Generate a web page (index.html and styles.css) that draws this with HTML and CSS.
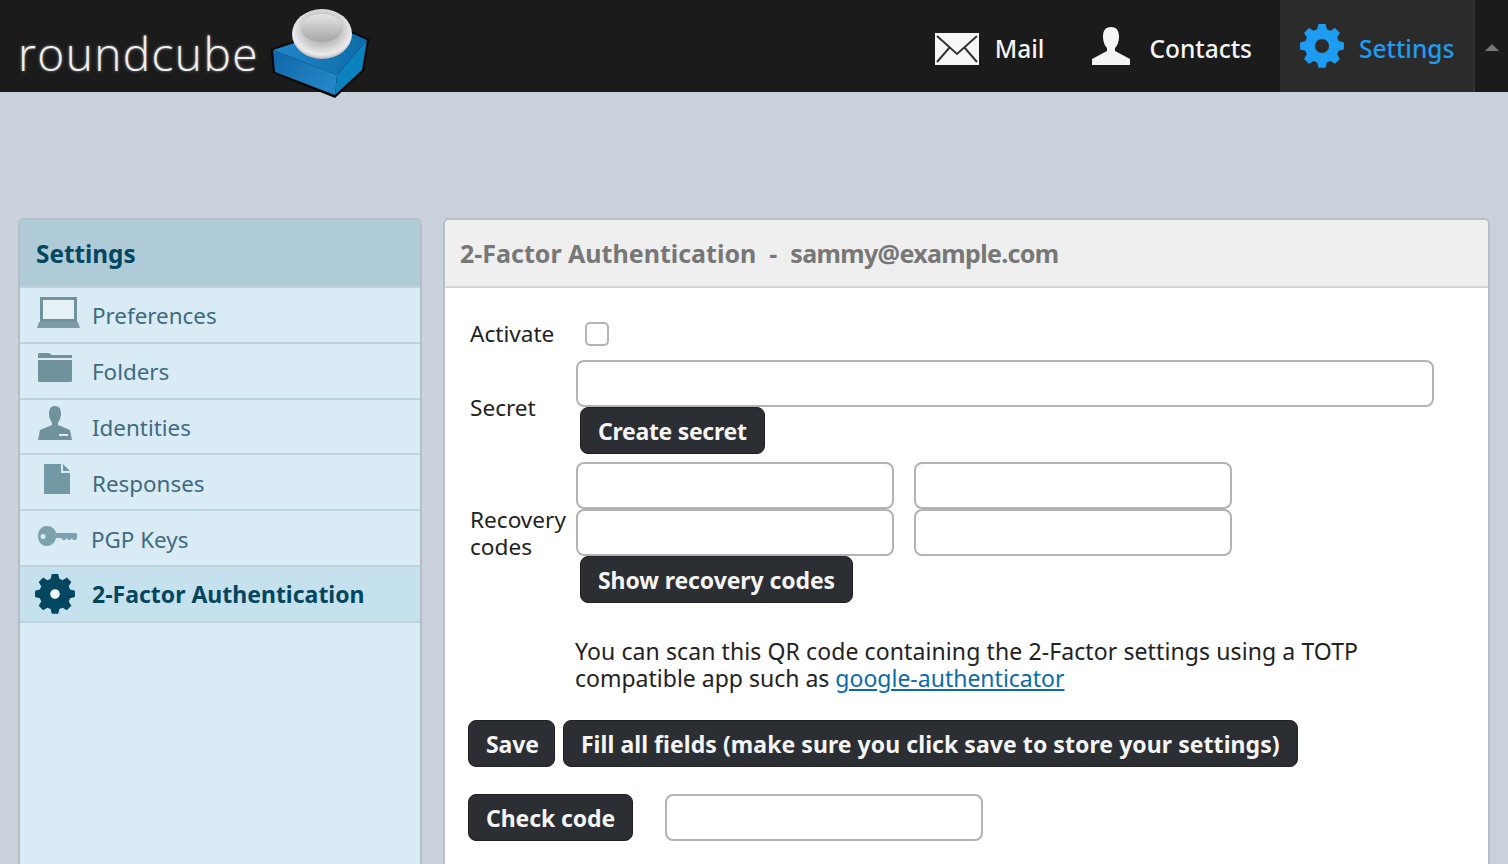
FILE: index.html
```html
<!DOCTYPE html>
<html lang="en">
<head>
<meta charset="utf-8">
<title>Roundcube Settings</title>
<link rel="stylesheet" href="styles.css">
</head>
<body>
<header class="topbar">
  <div class="logo">
    <span class="logo-text">roundcube</span>
    <svg class="logo-cube" width="100" height="96" viewBox="0 0 100 96">
      <defs>
        <linearGradient id="cubeLeft" x1="0" y1="0" x2="1" y2="0.6"><stop offset="0" stop-color="#0f66a8"/><stop offset="1" stop-color="#2486c6"/></linearGradient>
        <linearGradient id="cubeTop" x1="0" y1="0" x2="1" y2="0"><stop offset="0" stop-color="#2288cc"/><stop offset="1" stop-color="#0d6aa8"/></linearGradient>
        <radialGradient id="ball" cx="0.5" cy="0.42" r="0.62"><stop offset="0" stop-color="#9c9c9c"/><stop offset="0.5" stop-color="#c4c4c4"/><stop offset="0.8" stop-color="#ececec"/><stop offset="1" stop-color="#9a9a9a"/></radialGradient>
        <linearGradient id="dish" x1="0" y1="0" x2="0" y2="1"><stop offset="0" stop-color="#e4e4e4"/><stop offset="1" stop-color="#a6a6a6"/></linearGradient>
      </defs>
      <path d="M1 46 L70 23 L99 36 L94 68 L65 95 L3 70 Z" fill="#060606"/>
      <path d="M3 47 L70 25 L97 37 L67 72 Z" fill="url(#cubeTop)"/>
      <path d="M3 47 L67 72 L65 92 L5 69 Z" fill="url(#cubeLeft)"/>
      <path d="M67 72 L97 37 L92 67 L65 92 Z" fill="#0a82bd"/>
      <ellipse cx="52" cy="31" rx="30" ry="25" fill="url(#ball)"/>
      <ellipse cx="52" cy="25" rx="21" ry="14" fill="url(#dish)"/>
    </svg>
  </div>
  <nav class="topnav">
    <a class="tab tab-mail">
      <svg class="tab-icon tab-icon-mail" width="46" height="34" viewBox="0 0 46 34"><rect x="1" y="1" width="44" height="32" fill="#f7f7f7"/><path d="M3 4 L23 22 L43 4 M3 30 L16 15 M43 30 L30 15" fill="none" stroke="#333" stroke-width="2"/></svg>
      <span class="tab-label">Mail</span>
    </a>
    <a class="tab tab-contacts">
      <svg class="tab-icon" width="40" height="40" viewBox="0 0 40 40"><path d="M20 1c6 0 8 4 8 10 0 5-2 9-4 11v3l15 8v6H1v-6l15-8v-3c-2-2-4-6-4-11 0-6 2-10 8-10Z" fill="#f5f5f5"/></svg>
      <span class="tab-label">Contacts</span>
    </a>
    <a class="tab tab-active">
      <svg class="tab-icon" width="44" height="44" viewBox="-3 1 50 50"><path fill="#1e9cf2" fill-rule="evenodd" d="M18 1h8l1.500 6 4 1.700 5.300-3.200 5.600 5.600-3.200 5.300 1.700 4 6 1.500v8l-6 1.500-1.700 4 3.200 5.300-5.600 5.600-5.300-3.200-4 1.700-1.500 6h-8l-1.500-6-4-1.700-5.300 3.200-5.600-5.600 3.200-5.300-1.700-4-6-1.500v-8l6-1.500 1.700-4-3.200-5.300 5.600-5.600 5.300 3.200 4-1.700Z M22 18a8 8 0 1 0 0 16 8 8 0 0 0 0-16Z"/></svg>
      <span class="tab-label">Settings</span>
    </a>
    <span class="collapse"><i class="arrow"></i></span>
  </nav>
</header>

<main class="layout">
  <aside class="sidebar">
    <h2 class="sidebar-title">Settings</h2>
    <ul class="menu">
      <li class="menu-item">
        <svg class="menu-icon" width="44" height="36" viewBox="0 0 44 36"><path fill="#6f929d" fill-rule="evenodd" d="M6 0h37v25H6Z M9 3v19h31V3Z"/><path fill="#e6f1f6" d="M9 3h31v19H9Z"/><path fill="#7b9ba6" d="M5 25h39l2 6H3Z"/></svg>
        <span>Preferences</span>
      </li>
      <li class="menu-item">
        <svg class="menu-icon" width="44" height="36" viewBox="0 0 44 36"><path fill="#6f929d" d="M5 0h10l3 2h20v3H4V1Z M4 7h34v21l-1 1H5l-1-1Z"/></svg>
        <span>Folders</span>
      </li>
      <li class="menu-item">
        <svg class="menu-icon" width="44" height="36" viewBox="0 0 44 36"><g transform="translate(-1 -2)"><path fill="#6f929d" d="M22 0c5 0 6 4 6 8 0 4-2 7-3 9v2l12 5 2 10H5l2-10 12-5v-2c-1-2-3-5-3-9 0-4 1-8 6-8Z"/><path fill="#dbecf4" d="M26 28h9v2h-9Z"/></g></svg>
        <span>Identities</span>
      </li>
      <li class="menu-item">
        <svg class="menu-icon" width="44" height="36" viewBox="0 0 44 36"><path fill="#729aa5" d="M10 0h17v9h9v21H10Z M29 0l7 7h-7Z"/></svg>
        <span>Responses</span>
      </li>
      <li class="menu-item menu-key">
        <svg class="menu-icon" width="44" height="36" viewBox="0 0 44 36"><path fill="#7ba2ae" fill-rule="evenodd" d="M13 6c5 0 8 3 9 7h19a2 2 0 0 1 2 3v2c0 1-1 2-2 2h-2l-1-2-2 2h-2l-1-2-2 2h-2l-2-2h-5c-1 4-4 8-9 8-6 0-9-5-9-10s3-10 9-10Z M9 14a2.500 2.500 0 1 0 .1 0Z"/></svg>
        <span>PGP Keys</span>
      </li>
      <li class="menu-item menu-active">
        <svg class="menu-icon menu-icon-gear" width="40" height="40" viewBox="-3 1 50 50"><circle cx="22" cy="26" r="8" fill="#f4fafd"/><path fill="#03465f" fill-rule="evenodd" d="M18 1h8l1.500 6 4 1.700 5.300-3.200 5.600 5.600-3.200 5.300 1.700 4 6 1.500v8l-6 1.500-1.700 4 3.200 5.300-5.600 5.600-5.300-3.200-4 1.700-1.500 6h-8l-1.500-6-4-1.700-5.300 3.200-5.600-5.600 3.200-5.300-1.700-4-6-1.500v-8l6-1.500 1.700-4-3.200-5.300 5.600-5.600 5.300 3.200 4-1.700Z M22 20a6 6 0 1 0 0 12 6 6 0 0 0 0-12Z"/></svg>
        <span>2-Factor Authentication</span>
      </li>
    </ul>
  </aside>

  <section class="panel">
    <h1 class="panel-title">2-Factor Authentication &nbsp;-&nbsp; <span class="panel-user">sammy@example.com</span></h1>
    <div class="panel-body">
      <div class="row row-activate">
        <label class="row-label">Activate</label>
        <input type="checkbox" class="check">
      </div>
      <div class="row row-secret">
        <label class="row-label">Secret</label>
        <div class="row-content">
          <input type="text" class="field field-wide">
          <button class="btn btn-inset btn-create">Create secret</button>
        </div>
      </div>
      <div class="row row-recovery">
        <label class="row-label">Recovery codes</label>
        <div class="row-content">
          <div class="code-grid">
            <input type="text" class="field">
            <input type="text" class="field">
            <input type="text" class="field">
            <input type="text" class="field">
          </div>
          <button class="btn btn-inset">Show recovery codes</button>
        </div>
      </div>
      <p class="scan-note"><span class="scan-first">You can scan this QR code containing the 2-Factor settings using a TOTP</span> compatible app such as <a href="#" class="link">google-authenticator</a></p>
      <div class="actions">
        <button class="btn btn-save">Save</button>
        <button class="btn btn-fill">Fill all fields (make sure you click save to store your settings)</button>
      </div>
      <div class="check-code">
        <button class="btn">Check code</button>
        <input type="text" class="field">
      </div>
    </div>
  </section>
</main>
</body>
</html>
```
FILE: styles.css
```css
* { box-sizing: border-box; }
html, body { height: 100%; }
body {
  margin: 0;
  height: 864px;
  overflow: hidden;
  background: #c9d2da;
  font-family: "Noto Sans", "DejaVu Sans", sans-serif;
  font-size: 23px;
  color: #222;
}
.topbar {
  height: 92px;
  background: #1b1b1b;
  display: flex;
  justify-content: space-between;
}
.logo { display: flex; height: 92px; padding-left: 18px; position: relative; }
.logo-text {
  font-family: "Open Sans", sans-serif;
  font-weight: 300;
  font-size: 46px;
  line-height: 106px;
  letter-spacing: 1.4px;
  color: #f0f0f0;
  text-shadow: 0 0 3px rgba(255,255,255,.6);
}
.logo-cube { position: absolute; left: 270px; top: 3px; overflow: visible; }
.topnav { display: flex; height: 92px; }
.tab {
  display: flex;
  align-items: center;
  font-size: 24.5px;
  font-weight: 500;
  color: #f5f5f5;
}
.tab-label { padding-top: 4px; }
.tab-icon { margin-right: 15px; flex: none; }
.tab-icon-mail { margin-top: 5px; }
.tab-mail { padding-right: 25px; }
.tab-contacts { margin-left: 22px; padding-right: 28px; }
.tab-contacts .tab-icon { margin-right: 18px; }
.tab-active {
  background: #2b2b2b;
  color: #1e9cf2;
  width: 193px;
  padding-left: 20px;
}
.collapse {
  width: 35px;
  border-left: 2px solid #333;
  display: flex;
  justify-content: center;
  padding-top: 44px;
}
.arrow {
  width: 0; height: 0;
  border-left: 7px solid transparent;
  border-right: 7px solid transparent;
  border-bottom: 7px solid #777;
}
.layout {
  display: flex;
  gap: 21px;
  padding: 126px 18px 0 18px;
  height: 772px;
}
.sidebar {
  width: 404px;
  flex: none;
  background: #d9ebf4;
  border: 2px solid #b6bfc7;
  border-bottom: 0;
  border-radius: 6px 6px 0 0;
  overflow: hidden;
}
.sidebar-title {
  margin: 0;
  height: 68px;
  line-height: 67px;
  padding-left: 16px;
  background: #afcbd7;
  font-size: 24.3px;
  font-weight: bold;
  color: #03465f;
  border-bottom: 2px solid #bcd3dd;
}
.menu { list-style: none; margin: 0; padding: 0; }
.menu-item {
  display: flex;
  align-items: center;
  height: 55.8px;
  padding-left: 14px;
  border-bottom: 2px solid #bdd4de;
  color: #3f6a80;
  font-size: 22.4px;
}
.menu-item span { padding-top: 2px; }
.menu-icon { margin-right: 14px; flex: none; overflow: visible; }
.menu-icon-gear { margin-left: 1px; margin-right: 17px; }
.menu-key span { margin-left: -1px; }
.menu-active {
  background: #c6e1ee;
  color: #03465f;
  font-size: 23px;
  font-weight: bold;
}
.menu-active span { padding-top: 0; }
.panel {
  flex: 1;
  background: #fff;
  border: 2px solid #b6bfc7;
  border-bottom: 0;
  border-radius: 6px 6px 0 0;
  overflow: hidden;
}
.panel-title {
  margin: 0;
  height: 68px;
  line-height: 66px;
  padding-left: 15px;
  background: #efefef;
  border-bottom: 2px solid #d5d5d5;
  font-size: 25px;
  font-weight: bold;
  color: #777;
}
.panel-user { letter-spacing: -0.65px; }
.panel-body { padding: 0 0 0 23px; }
.row { display: flex; }
.row-label { width: 108px; flex: none; padding-left: 2px; line-height: 27px; font-size: 22.6px; }
.row-activate { align-items: center; height: 72px; padding-top: 19px; }
.check {
  appearance: none;
  margin: 0 0 0 9px;
  width: 24px; height: 24px;
  border: 2px solid #b3b3b3;
  border-radius: 5px;
  background: #fff;
}
.row-content { display: flex; flex-direction: column; align-items: flex-start; }
.row-secret .row-label { padding-top: 34px; }
.row-secret { height: 102px; }
.row-recovery { height: 150px; }
.row-recovery .row-label { padding-top: 44px; }
.field {
  display: block;
  height: 47px;
  width: 318px;
  border: 2px solid #b3b3b3;
  border-radius: 8px;
  background: #fff;
  padding: 0;
  margin: 0;
}
.field-wide { width: 858px; }
.btn {
  display: block;
  height: 47px;
  margin: 0;
  padding: 0 17px;
  border: 1px solid #1f2125;
  border-radius: 8px;
  background: #2b2e33;
  color: #f5f5f5;
  font-family: inherit;
  font-size: 23px;
  font-weight: bold;
  letter-spacing: -0.1px;
  white-space: nowrap;
}
.btn-inset { margin-left: 4px; }
.btn-create { letter-spacing: -0.3px; }
.btn-save { padding-right: 15px; }
.btn-fill { letter-spacing: 0.06px; }
.code-grid {
  display: grid;
  grid-template-columns: 318px 318px;
  column-gap: 20px;
  row-gap: 0;
}
.scan-note {
  margin: 26px 0 0;
  padding-left: 107px;
  width: 920px;
  line-height: 27px;
}
.scan-first { letter-spacing: 0.1px; }
.link { color: #0d6aa8; }
.actions { display: flex; gap: 8px; margin-top: 28px; }
.check-code { display: flex; gap: 32px; margin-top: 27px; }
```
